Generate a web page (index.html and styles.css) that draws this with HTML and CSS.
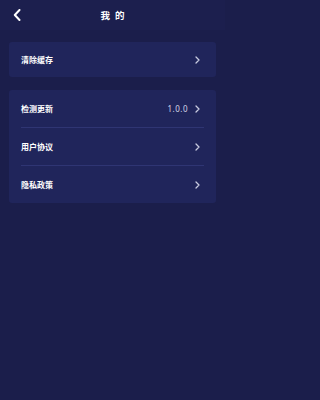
FILE: index.html
```html
<!DOCTYPE html>
<html lang="zh">
<head>
<meta charset="utf-8">
<link rel="stylesheet" href="styles.css">
</head>
<body>
<div class="page">
  <header class="header">
    <svg class="back" width="8" height="12" viewBox="0 0 8 12"><path d="M6.5 1 L1.8 6 L6.5 11" fill="none" stroke="#ffffff" stroke-width="2" stroke-linecap="round" stroke-linejoin="round"/></svg>
    <div class="title">我的</div>
  </header>
  <section class="card card-single">
    <div class="row">
      <span class="label">清除缓存</span>
      <span class="right"><svg class="chev" width="5" height="8" viewBox="0 0 5 8"><path d="M1 1 L4 4 L1 7" fill="none" stroke="#c8cbe0" stroke-width="1.3" stroke-linecap="round" stroke-linejoin="round"/></svg></span>
    </div>
  </section>
  <section class="card card-list">
    <div class="row">
      <span class="label">检测更新</span>
      <span class="right"><span class="value">1.0.0</span><svg class="chev" width="5" height="8" viewBox="0 0 5 8"><path d="M1 1 L4 4 L1 7" fill="none" stroke="#c8cbe0" stroke-width="1.3" stroke-linecap="round" stroke-linejoin="round"/></svg></span>
    </div>
    <div class="sep"></div>
    <div class="row">
      <span class="label">用户协议</span>
      <span class="right"><svg class="chev" width="5" height="8" viewBox="0 0 5 8"><path d="M1 1 L4 4 L1 7" fill="none" stroke="#c8cbe0" stroke-width="1.3" stroke-linecap="round" stroke-linejoin="round"/></svg></span>
    </div>
    <div class="sep"></div>
    <div class="row">
      <span class="label">隐私政策</span>
      <span class="right"><svg class="chev" width="5" height="8" viewBox="0 0 5 8"><path d="M1 1 L4 4 L1 7" fill="none" stroke="#c8cbe0" stroke-width="1.3" stroke-linecap="round" stroke-linejoin="round"/></svg></span>
    </div>
  </section>
</div>
</body>
</html>
```
FILE: styles.css
```css
html, body {
  margin: 0;
  padding: 0;
  background: #1b1e4b;
}
body {
  font-family: "Noto Sans CJK SC", "Noto Sans", sans-serif;
  color: #ffffff;
}
.page {
  width: 225px;
  height: 400px;
  background: #1b1e4b;
  overflow: hidden;
}
.header {
  height: 30px;
  display: flex;
  align-items: center;
  justify-content: center;
  position: relative;
  background: #1c1f4e;
}
.back {
  position: absolute;
  left: 13px;
  top: 9px;
}
.title {
  font-size: 9.5px;
  font-weight: 700;
  letter-spacing: 5px;
  margin-left: 5px;
}
.card {
  margin: 0 9px;
  background: #20255b;
  border-radius: 3px;
}
.card-single {
  margin-top: 12px;
}
.card-single .row {
  height: 35px;
}
.card-list {
  margin-top: 13px;
  padding: 0;
}
.row {
  height: 37px;
  display: flex;
  align-items: center;
  justify-content: space-between;
  padding: 0 16px 0 12px;
}
.label {
  font-size: 8px;
  font-weight: 700;
  line-height: 1;
}
.right {
  display: flex;
  align-items: center;
  gap: 7px;
}
.value {
  font-family: "Noto Sans", sans-serif;
  font-size: 8px;
  color: #d4d6e6;
  letter-spacing: 0.5px;
}
.sep {
  height: 1px;
  margin: 0 12px 0 12px;
  background: #2f3573;
}
```
